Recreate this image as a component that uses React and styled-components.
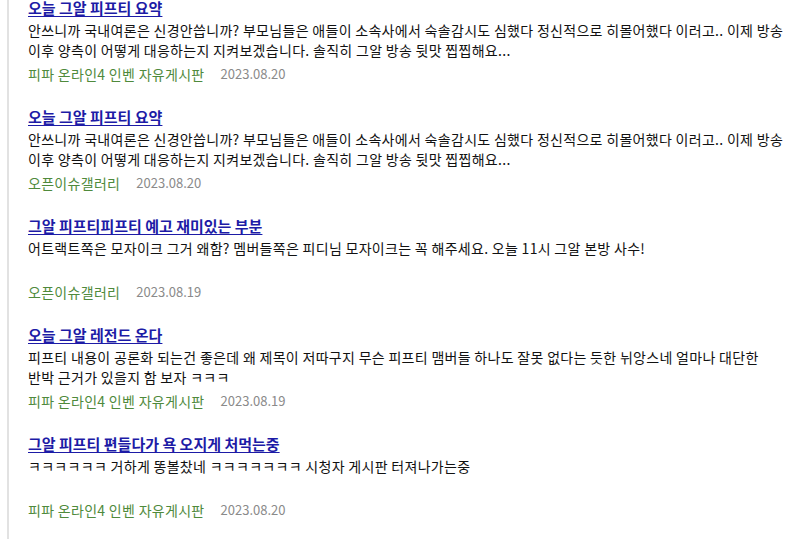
import React from 'react'
import styled, { createGlobalStyle } from 'styled-components';

const GlobalStyle = createGlobalStyle`
    html, body {
        margin: 0;
        padding: 0;
        background: #fff;
    }
    body {
        font-family: "Noto Sans CJK KR", "Noto Sans", sans-serif;
        overflow: hidden;
    }
`;

const posts = [
    {
        title: '오늘 그알 피프티 요약',
        body: '안쓰니까 국내여론은 신경안씁니까? 부모님들은 애들이 소속사에서 숙솔감시도 심했다 정신적으로 히몰어했다 이러고.. 이제 방송 이후 양측이 어떻게 대응하는지 지켜보겠습니다. 솔직히 그알 방송 뒷맛 찝찝해요...',
        board: '피파 온라인4 인벤 자유게시판',
        date: '2023.08.20',
    },
    {
        title: '오늘 그알 피프티 요약',
        body: '안쓰니까 국내여론은 신경안씁니까? 부모님들은 애들이 소속사에서 숙솔감시도 심했다 정신적으로 히몰어했다 이러고.. 이제 방송 이후 양측이 어떻게 대응하는지 지켜보겠습니다. 솔직히 그알 방송 뒷맛 찝찝해요...',
        board: '오픈이슈갤러리',
        date: '2023.08.20',
    },
    {
        title: '그알 피프티피프티 예고 재미있는 부분',
        body: '어트랙트쪽은 모자이크 그거 왜함? 멤버들쪽은 피디님 모자이크는 꼭 해주세요. 오늘 11시 그알 본방 사수!',
        board: '오픈이슈갤러리',
        date: '2023.08.19',
    },
    {
        title: '오늘 그알 레전드 온다',
        body: '피프티 내용이 공론화 되는건 좋은데 왜 제목이 저따구지 무슨 피프티 맴버들 하나도 잘못 없다는 듯한 뉘앙스네 얼마나 대단한 반박 근거가 있을지 함 보자 ㅋㅋㅋ',
        board: '피파 온라인4 인벤 자유게시판',
        date: '2023.08.19',
    },
    {
        title: '그알 피프티 편들다가 욕 오지게 처먹는중',
        body: 'ㅋㅋㅋㅋㅋㅋ 거하게 똥볼찼네 ㅋㅋㅋㅋㅋㅋㅋ 시청자 게시판 터져나가는중',
        board: '피파 온라인4 인벤 자유게시판',
        date: '2023.08.20',
    },
];

function App() {
    return (
        <>
            <GlobalStyle />
            <ResultList>
                {posts.map((post, i) => (
                    <Post key={i}>
                        <Title href="#">{post.title}</Title>
                        <Snippet>{post.body}</Snippet>
                        <Meta>
                            <Board>{post.board}</Board>
                            <Date>{post.date}</Date>
                        </Meta>
                    </Post>
                ))}
            </ResultList>
        </>
    )
}

const ResultList = styled.div`
    margin-left: 7px;
    min-height: 539px;
    border-left: 2px solid #e2e2e2;
    padding-left: 19px;
    padding-right: 10px;
`;

const Post = styled.div`
    display: flex;
    flex-direction: column;
    align-items: flex-start;
    padding-bottom: 25px;
`;

const Title = styled.a`
    display: block;
    height: 16px;
    font-size: 15px;
    font-weight: 700;
    line-height: 16px;
    color: #1d1ba6;
    text-decoration: underline;
    text-underline-offset: 2px;
`;

const Snippet = styled.p`
    margin: 4px 0 0;
    height: 40px;
    overflow: hidden;
    font-size: 14px;
    letter-spacing: 0.3px;
    word-break: keep-all;
    line-height: 20px;
    color: #111;
`;

const Meta = styled.div`
    display: flex;
    align-items: center;
    gap: 16px;
    height: 20px;
    margin-top: 4px;
`;

const Board = styled.span`
    font-size: 14px;
    letter-spacing: 0.3px;
    line-height: 20px;
    color: #4f8a3c;
`;

const Date = styled.span`
    font-size: 13px;
    line-height: 20px;
    color: #8a8a8a;
`;

export default App;
